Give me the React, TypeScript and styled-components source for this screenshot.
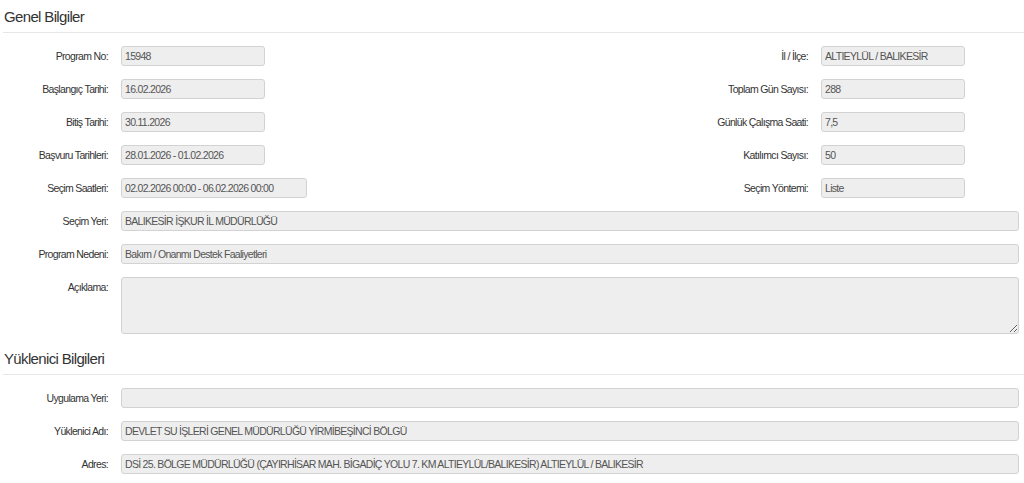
import React from 'react'
import styled, { createGlobalStyle } from 'styled-components'

const GlobalStyle = createGlobalStyle`
  body {
    margin: 0;
    background: #fff;
    font-family: "Liberation Sans", Arial, sans-serif;
  }
`

const topRows = [
  { left: ['Program No:', '15948', 144], right: ['İl / İlçe:', 'ALTIEYLÜL / BALIKESİR'] },
  { left: ['Başlangıç Tarihi:', '16.02.2026', 144], right: ['Toplam Gün Sayısı:', '288'] },
  { left: ['Bitiş Tarihi:', '30.11.2026', 144], right: ['Günlük Çalışma Saati:', '7,5'] },
  { left: ['Başvuru Tarihleri:', '28.01.2026 - 01.02.2026', 144], right: ['Katılımcı Sayısı:', '50'] },
  { left: ['Seçim Saatleri:', '02.02.2026 00:00 - 06.02.2026 00:00', 186], right: ['Seçim Yöntemi:', 'Liste'] },
] as const

const contractor = [
  ['Uygulama Yeri:', ''],
  ['Yüklenici Adı:', 'DEVLET SU İŞLERİ GENEL MÜDÜRLÜĞÜ YİRMİBEŞİNCİ BÖLGÜ'],
  ['Adres:', 'DSİ 25. BÖLGE MÜDÜRLÜĞÜ (ÇAYIRHİSAR MAH. BİGADİÇ YOLU 7. KM ALTIEYLÜL/BALIKESİR) ALTIEYLÜL / BALIKESİR'],
]

const App = () => {
  return (
    <S.Page>
      <GlobalStyle />
      <S.SectionTitle>Genel Bilgiler</S.SectionTitle>
      <S.TopGrid>
        {topRows.map((row) => (
          <React.Fragment key={row.left[0]}>
            <S.Label>{row.left[0]}</S.Label>
            <S.Field $width={row.left[2]} readOnly value={row.left[1]} />
            <S.Label>{row.right[0]}</S.Label>
            <S.Field $width={144} readOnly value={row.right[1]} />
          </React.Fragment>
        ))}
      </S.TopGrid>
      <S.Rows>
        <S.Row>
          <S.Label>Seçim Yeri:</S.Label>
          <S.Field readOnly value="BALIKESİR İŞKUR İL MÜDÜRLÜĞÜ" />
        </S.Row>
        <S.Row>
          <S.Label>Program Nedeni:</S.Label>
          <S.Field readOnly value="Bakım / Onanmı Destek Faaliyetleri" />
        </S.Row>
        <S.Row>
          <S.Label>Açıklama:</S.Label>
          <S.TextArea readOnly value="" />
        </S.Row>
      </S.Rows>

      <S.SectionTitle $spaced>Yüklenici Bilgileri</S.SectionTitle>
      <S.Rows>
        {contractor.map(([label, value]) => (
          <S.Row key={label}>
            <S.Label>{label}</S.Label>
            <S.Field readOnly value={value} />
          </S.Row>
        ))}
      </S.Rows>
    </S.Page>
  )
}

const S = {
  Page: styled.div`
    padding: 0 5px 10px 3px;
    box-sizing: border-box;
    width: 1024px;
  `,
  SectionTitle: styled.h3<{ $spaced?: boolean }>`
    margin: ${(p) => (p.$spaced ? '8px' : '0')} -5px 13px 0;
    padding: 8px 0 6px 1px;
    font-size: 15px;
    line-height: 18px;
    font-weight: normal;
    letter-spacing: -0.65px;
    color: #333;
    border-bottom: 1px solid #e6e6e6;
  `,
  TopGrid: styled.div`
    display: grid;
    grid-template-columns: 105px 337px 337px 144px;
    column-gap: 13px;
    row-gap: 13px;
    margin-bottom: 13px;
  `,
  Rows: styled.div`
    display: flex;
    flex-direction: column;
    gap: 13px;
  `,
  Row: styled.div`
    display: grid;
    grid-template-columns: 105px 1fr;
    column-gap: 13px;
    align-items: start;
  `,
  Label: styled.label`
    text-align: right;
    font-size: 10.5px;
    line-height: 20px;
    letter-spacing: -0.65px;
    color: #333;
    white-space: nowrap;
  `,
  Field: styled.input<{ $width?: number }>`
    box-sizing: border-box;
    width: ${(p) => (p.$width ? `${p.$width}px` : '100%')};
    height: 20px;
    margin: 0;
    padding: 0 3px;
    border: 1px solid #d2d2d2;
    border-radius: 3px;
    background: #eee;
    color: #555;
    font-family: "Liberation Sans", Arial, sans-serif;
    font-size: 10.5px;
    letter-spacing: -0.7px;
    outline: none;
  `,
  TextArea: styled.textarea`
    box-sizing: border-box;
    width: 100%;
    height: 57px;
    margin: 0;
    padding: 3px 4px;
    border: 1px solid #d2d2d2;
    border-radius: 3px;
    background: #eee;
    color: #555;
    font-family: "Liberation Sans", Arial, sans-serif;
    font-size: 11px;
    display: block;
    outline: none;
  `,
}

export default App
